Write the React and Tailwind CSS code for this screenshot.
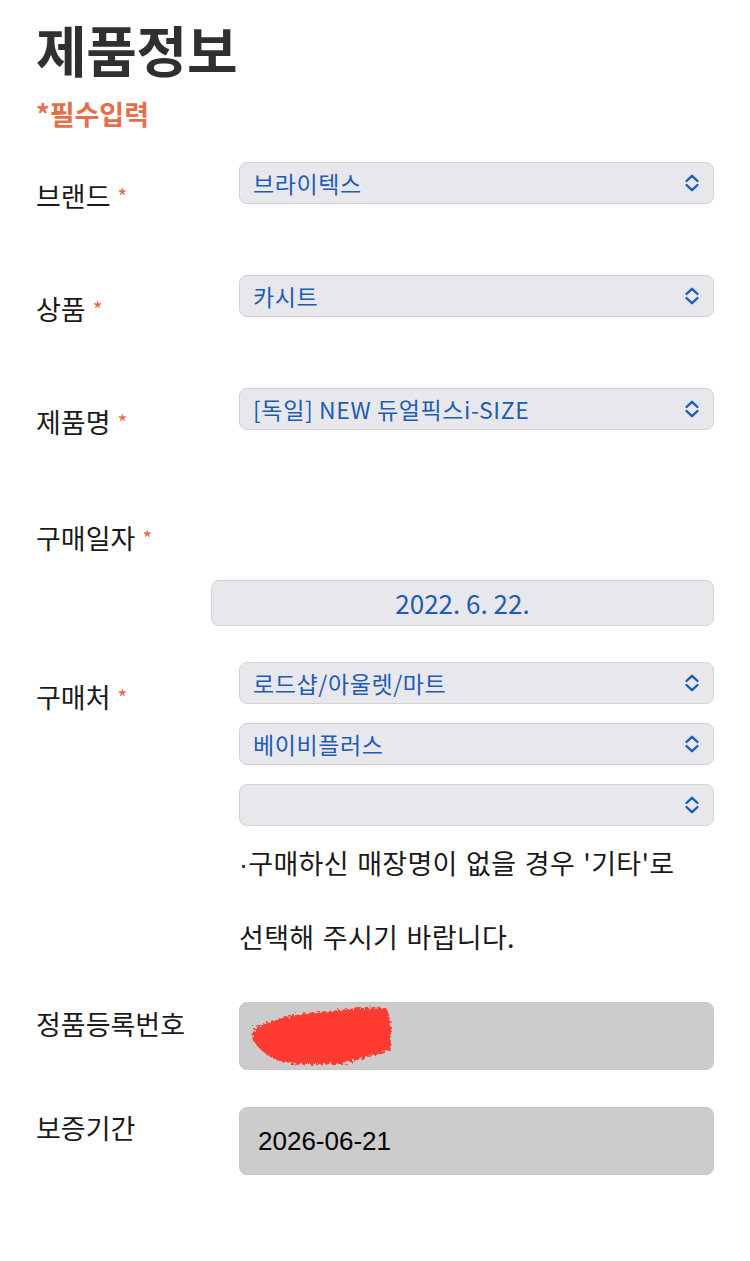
const font = { fontFamily: '"Noto Sans CJK KR", "Noto Sans", sans-serif' };

function Chevrons() {
    return (
        <svg width="16" height="20" viewBox="0 0 16 20" fill="none" stroke="#1d5cb4" strokeWidth="2.4" strokeLinecap="round" strokeLinejoin="round">
            <path d="M2.5 8 L8 2.8 L13.5 8" />
            <path d="M2.5 12 L8 17.2 L13.5 12" />
        </svg>
    )
}

function SelectBox({ value }) {
    return (
        <div className="flex h-[42px] items-center justify-between rounded-[8px] border border-[#d2d2d6] bg-[#e8e8ec] pl-[13px] pr-[13px]">
            <span className="text-[23px] leading-none tracking-[0.6px] text-[#1d5cb4]">{value}</span>
            <Chevrons />
        </div>
    )
}

function Label({ text, required, className }) {
    return (
        <div className={'w-[203px] shrink-0 text-[27px] leading-[32px] text-[#1a1a1a] ' + (className || '')}>
            {text}
            {required && <span className="ml-[7px] align-top text-[21px] text-[#e2683f]">*</span>}
        </div>
    )
}

function RedScribble() {
    return (
        <svg width="150" height="64" viewBox="0 0 150 64">
            <defs>
                <filter id="rough" x="-10%" y="-10%" width="120%" height="120%">
                    <feTurbulence type="fractalNoise" baseFrequency="0.35" numOctaves="2" result="n" />
                    <feDisplacementMap in="SourceGraphic" in2="n" scale="7" />
                </filter>
            </defs>
            <path
                d="M8 24 C 30 16, 45 10, 70 8 C 95 6, 120 2, 140 4 C 146 14, 146 32, 144 46 C 128 52, 110 56, 95 60 C 70 60, 50 62, 30 56 C 18 50, 10 42, 6 34 Z"
                fill="#ff3b30"
                filter="url(#rough)"
            />
        </svg>
    )
}

export default function App() {
    return (
        <div className="min-h-[1261px] w-[750px] bg-white px-[36px] pt-[18px]" style={font}>
            <h1 className="text-[55px] font-bold leading-[60px] tracking-[-0.3px] text-[#303030]">제품정보</h1>
            <p className="mt-[19px] text-[27px] font-bold leading-[34px] text-[#e2704a]">*필수입력</p>

            {/* brand */}
            <div className="mt-[31px] flex">
                <Label text="브랜드" required className="pt-[18px]" />
                <div className="flex-1"><SelectBox value="브라이텍스" /></div>
            </div>

            {/* product */}
            <div className="mt-[63px] flex">
                <Label text="상품" required className="pt-[18px]" />
                <div className="flex-1"><SelectBox value="카시트" /></div>
            </div>

            {/* product name */}
            <div className="mt-[63px] flex">
                <Label text="제품명" required className="pt-[18px]" />
                <div className="flex-1"><SelectBox value="[독일] NEW 듀얼픽스i-SIZE" /></div>
            </div>

            {/* purchase date */}
            <div className="mt-[84px] flex">
                <Label text="구매일자" required />
            </div>
            <div className="ml-[175px] mt-[26px] flex h-[46px] items-center justify-center rounded-[8px] border border-[#d2d2d6] bg-[#e8e8ec]">
                <span className="text-[26px] leading-none text-[#1d5cb4]">2022. 6. 22.</span>
            </div>

            {/* purchase place */}
            <div className="mt-[36px] flex">
                <Label text="구매처" required className="pt-[19px]" />
                <div className="flex flex-1 flex-col gap-[19px]">
                    <SelectBox value="로드샵/아울렛/마트" />
                    <SelectBox value="베이비플러스" />
                    <SelectBox value="" />
                </div>
            </div>
            <div className="ml-[203px] mt-px text-[27px] leading-[72px] tracking-[0.3px] text-[#1a1a1a]" style={{ wordSpacing: '2px' }}>
                <p><span style={{ fontFamily: '"Liberation Sans", sans-serif' }}>·</span>구매하신 매장명이 없을 경우 '기타'로</p>
                <p>선택해 주시기 바랍니다.</p>
            </div>

            {/* serial */}
            <div className="mt-[29px] flex">
                <Label text="정품등록번호" className="pt-[6px]" />
                <div className="flex h-[68px] flex-1 items-center overflow-hidden rounded-[8px] border border-[#c6c6c6] bg-[#cccccc] pl-[6px]">
                    <RedScribble />
                </div>
            </div>

            {/* warranty */}
            <div className="mt-[37px] flex">
                <Label text="보증기간" className="pt-[5px]" />
                <div className="flex h-[68px] flex-1 items-center rounded-[8px] border border-[#c6c6c6] bg-[#cccccc] pl-[18px]">
                    <span className="text-[26px] leading-none text-black" style={{ fontFamily: '"Liberation Sans", Arial, sans-serif' }}>2026-06-21</span>
                </div>
            </div>
        </div>
    )
}
